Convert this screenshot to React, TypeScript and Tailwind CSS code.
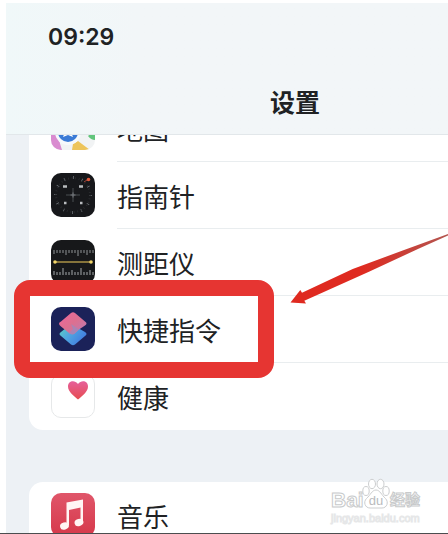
import type { ReactNode } from "react";

const iconClass = "mb-px block size-11 shrink-0";

function MapsIcon() {
  return (
    <svg viewBox="0 0 44 44" className={iconClass} aria-hidden="true">
      <defs>
        <clipPath id="maps-clip">
          <rect width="44" height="44" rx="10" />
        </clipPath>
      </defs>
      <g clipPath="url(#maps-clip)">
        <rect width="44" height="44" fill="#f1f3f4" />
        <path d="M0 0H20V24H0Z" fill="#7ed07f" />
        <path d="M0 25L8 28Q8 37 11 44H0Z" fill="#d98bd0" />
        <path d="M22 38L27 35L39 44H21Z" fill="#edc45a" />
        <path d="M37 30L44 24V34Q40 34 37 30Z" fill="#62c57c" />
        <circle cx="17" cy="26" r="13" fill="#f6f9fc" />
        <circle cx="17" cy="26" r="10" fill="#3b7bd6" />
        <path d="M12 31l5-13 5 13-5-2z" fill="#fff" />
      </g>
    </svg>
  );
}

function CompassIcon() {
  return (
    <svg viewBox="0 0 44 44" className={iconClass} aria-hidden="true">
      <rect width="44" height="44" rx="10" fill="#17181b" />
      <circle
        cx="22"
        cy="22"
        r="17.500"
        fill="none"
        stroke="#70747a"
        strokeWidth="3"
        strokeDasharray="0.8 8.360"
        pathLength="109.920"
      />
      <circle
        cx="22"
        cy="22"
        r="17"
        fill="none"
        stroke="#2c2e31"
        strokeWidth="2"
        strokeDasharray="0.7 2.860"
      />
      <path d="M22 15v14M15 22h14" stroke="#4b4f53" strokeWidth="1" />
      <path d="M22 19.500v5M19.500 22h5" stroke="#777b7e" strokeWidth="1" />
      <g stroke="#b9bcbf" strokeWidth="2.500">
        <path d="M12 13.500h4M28 13.500h4M13 30h2.500M29 30h2.500" />
      </g>
      <circle cx="37.500" cy="6.500" r="1.800" fill="#e05a3c" />
      <path d="M33 9l3-2" stroke="#a5453a" />
    </svg>
  );
}

function MeasureIcon() {
  return (
    <svg viewBox="0 0 44 44" className={iconClass} aria-hidden="true">
      <rect width="44" height="44" rx="10" fill="#17181a" />
      <path
        d="M3 10v4M6 10v3M9 10v3M12 10v3M15 10v5M18 10v3M21 10v3M24 10v3M27 10v6M30 10v3M33 10v3M36 10v5M39 10v3M42 10v3"
        stroke="#8f9294"
        strokeWidth="1"
      />
      <path
        d="M3 35v-4M6 35v-3M9 35v-3M12 35v-7M15 35v-3M18 35v-3M21 35v-5M24 35v-3M27 35v-3M30 35v-7M33 35v-3M36 35v-3M39 35v-5M42 35v-3"
        stroke="#a5a8aa"
        strokeWidth="1"
      />
      <path d="M4 22h36" stroke="#ad9347" strokeWidth="1.500" />
      <circle cx="4" cy="22" r="1.800" fill="#f2d569" />
      <circle cx="40" cy="22" r="1.800" fill="#f2d569" />
    </svg>
  );
}

function ShortcutsIcon() {
  return (
    <svg viewBox="0 0 44 44" className={iconClass} aria-hidden="true">
      <defs>
        <linearGradient id="shortcut-top" x1="0" y1="0" x2="1" y2="1">
          <stop offset="0" stopColor="#f0669b" />
          <stop offset="0.5" stopColor="#dc7090" />
          <stop offset="1" stopColor="#b77bb8" />
        </linearGradient>
        <linearGradient id="shortcut-bottom" x1="0" y1="0" x2="1" y2="0.6">
          <stop offset="0" stopColor="#5fd4bd" />
          <stop offset="0.5" stopColor="#4fa5e0" />
          <stop offset="1" stopColor="#427ce0" />
        </linearGradient>
      </defs>
      <rect width="44" height="44" rx="10" fill="#1b2259" />
      <path
        d="M20 17L34 25Q37 27 34 29L24 37.500Q22 39 20 37.500L10 29Q7 27 10 25Z"
        fill="url(#shortcut-bottom)"
      />
      <path
        d="M20 6Q22 4.500 24 6L34 14.500Q37 16.500 34 18.500L28 22.500L23 27Q20 28 18 26L10 19.500Q6 16.500 10 14.500Z"
        fill="url(#shortcut-top)"
      />
      <path d="M20 17L28 22.500L23 27Q20 28 18 26L22 22Z" fill="#a984b4" />
    </svg>
  );
}

function HealthIcon() {
  return (
    <svg viewBox="0 0 44 44" className={iconClass} aria-hidden="true">
      <defs>
        <linearGradient id="heart" x1="0" y1="0" x2="0" y2="1">
          <stop offset="0" stopColor="#e6609a" />
          <stop offset="1" stopColor="#e64c50" />
        </linearGradient>
      </defs>
      <rect x="0.500" y="0.500" width="43" height="43" rx="9.500" fill="#fff" stroke="#e6e8e9" />
      <path
        d="M27 25.500C23 22 17 18 17 12.500C17 7 23.500 5.500 27 10C30.500 5.500 37 7 37 12.500C37 18 31 22 27 25.500Z"
        fill="url(#heart)"
      />
    </svg>
  );
}

function MusicIcon() {
  return (
    <svg viewBox="0 0 44 44" className={iconClass} aria-hidden="true">
      <defs>
        <linearGradient id="music" x1="0" y1="0" x2="0" y2="1">
          <stop offset="0" stopColor="#e0566a" />
          <stop offset="1" stopColor="#d6384a" />
        </linearGradient>
      </defs>
      <rect width="44" height="44" rx="10" fill="url(#music)" />
      <g fill="#fff5f4">
        <path d="M15.500 9.500L32 6.500V14L18 17V32H15.500Z" />
        <path d="M29.500 9H32V29H29.500Z" />
        <ellipse cx="13.500" cy="33" rx="4.500" ry="3.500" transform="rotate(-15 13.500 33)" />
        <ellipse cx="28" cy="29.500" rx="4.500" ry="3.500" transform="rotate(-15 28 29.500)" />
      </g>
    </svg>
  );
}

interface RowProps {
  icon: ReactNode;
  label: string;
  last?: boolean;
  highlighted?: boolean;
}

function SettingsRow({ icon, label, last = false, highlighted = false }: RowProps) {
  return (
    <li className={highlighted ? "relative z-10" : ""}>
      <a href="#" className="flex h-[67px] items-center gap-[22px] pl-[22px]">
        {icon}
        <span
          className={
            last
              ? "flex h-full flex-1 items-center pb-px"
              : "flex h-full flex-1 items-center border-b border-[#e9edef]"
          }
        >
          {label}
        </span>
      </a>
      {highlighted && (
        <span className="pointer-events-none absolute -top-4 -left-[15px] h-[98px] w-[260px] rounded-[16px] border-[16px] border-[#e63532]" />
      )}
    </li>
  );
}

function PointerArrow() {
  return (
    <svg
      viewBox="0 0 158 72"
      className="pointer-events-none absolute top-[233px] right-0 z-20 h-[72px] w-[158px]"
      aria-hidden="true"
    >
      <defs>
        <linearGradient id="arrow" x1="0" y1="0" x2="1" y2="0">
          <stop offset="0.45" stopColor="#df2a20" />
          <stop offset="1" stopColor="#b35650" />
        </linearGradient>
      </defs>
      <path
        d="M0.500 69.500L10.300 57L12 59.700L62.700 36L112.700 17.500L158 1V2.500L129 15.500L79.500 38.500L14.300 67.700L16 70.500Z"
        fill="url(#arrow)"
      />
    </svg>
  );
}

function Watermark() {
  return (
    <div className="pointer-events-none absolute right-[27px] bottom-[9px] z-20 w-[90px] font-['Liberation_Sans','Noto_Sans_CJK_SC',sans-serif] whitespace-nowrap text-white">
      <div className="flex h-[33px] items-end font-bold [-webkit-text-stroke:1px_#c8cacb]">
        <span className="w-[31px] text-[21px] leading-6">Bai</span>
        <svg viewBox="0 0 28 32" className="mb-0.5 h-8 w-7 shrink-0" aria-hidden="true">
          <g fill="#fff" stroke="#cccecf">
            <ellipse cx="10" cy="6" rx="3.500" ry="4.700" />
            <ellipse cx="18.500" cy="6" rx="3.500" ry="4.700" />
            <ellipse cx="4" cy="13" rx="3.200" ry="4.500" />
            <ellipse cx="24" cy="13" rx="3.200" ry="4.500" />
            <path d="M14 12C18 12 19.500 17 23.500 20.500C27 24 25 30 20 30H8C3 30 1 24 4.500 20.500C8.500 17 10 12 14 12Z" />
          </g>
          <text
            x="14"
            y="27"
            textAnchor="middle"
            className="fill-[#b9bbbd] text-[13px] font-normal [-webkit-text-stroke:0px]"
          >
            du
          </text>
        </svg>
        <span className="text-[15px] leading-6">经验</span>
      </div>
      <div className="text-[11px] leading-3 [-webkit-text-stroke:1px_#e6e7e8]">
        jingyan.baidu.com
      </div>
    </div>
  );
}

export default function App() {
  return (
    <div className="relative flex h-screen flex-col overflow-hidden border-b border-[#4b4d4f] bg-white pt-[3px] pl-1.5 font-['Noto_Sans_CJK_SC',sans-serif] text-[#202224]">
      <header className="z-10 h-[132px] shrink-0 border-b border-[#e2e7ea] bg-linear-to-r from-[#f0f8f9] to-[#f2f6f8] to-30% pt-[18px]">
        <time className="block pl-[42px] font-[Inter,sans-serif] text-[23px] leading-8 font-semibold">
          09:29
        </time>
        <h1 className="pt-[30px] pl-[264px] text-[25px] leading-9 font-bold">设置</h1>
      </header>

      <main className="min-h-0 flex-1 overflow-hidden bg-[#edf1f5] pl-[23px] text-[26px]">
        <ul className="-mt-10 rounded-l-[14px] bg-white">
          <SettingsRow icon={<MapsIcon />} label="地图" />
          <SettingsRow icon={<CompassIcon />} label="指南针" />
          <SettingsRow icon={<MeasureIcon />} label="测距仪" />
          <SettingsRow icon={<ShortcutsIcon />} label="快捷指令" highlighted />
          <SettingsRow icon={<HealthIcon />} label="健康" last />
        </ul>
        <ul className="mt-[52px] rounded-l-[14px] bg-white">
          <SettingsRow icon={<MusicIcon />} label="音乐" last />
        </ul>
      </main>

      <PointerArrow />
      <Watermark />
    </div>
  );
}
